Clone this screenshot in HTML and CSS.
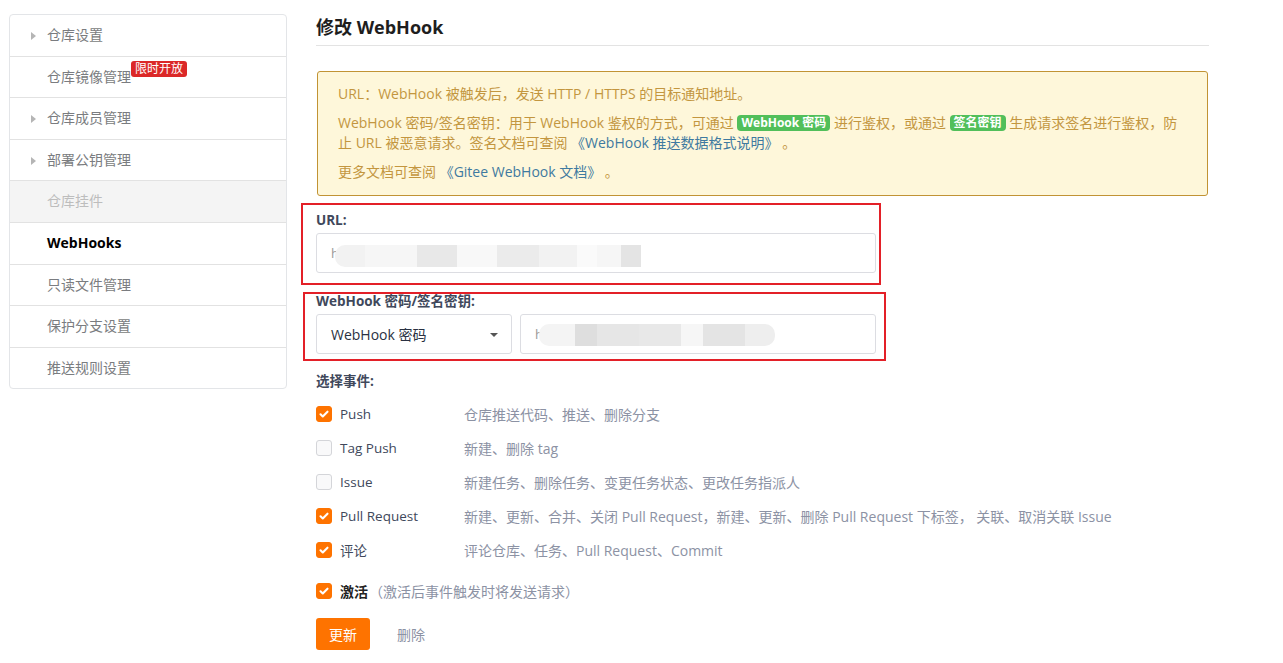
FILE: index.html
```html
<!DOCTYPE html>
<html lang="zh-CN">
<head>
<meta charset="utf-8">
<title>修改 WebHook</title>
<link rel="stylesheet" href="styles.css">
</head>
<body>
<div class="page">
  <nav class="sidebar">
    <div class="item"><span class="caret"></span>仓库设置</div>
    <div class="item">仓库镜像管理<span class="badge">限时开放</span></div>
    <div class="item"><span class="caret"></span>仓库成员管理</div>
    <div class="item"><span class="caret"></span>部署公钥管理</div>
    <div class="item disabled">仓库挂件</div>
    <div class="item active">WebHooks</div>
    <div class="item">只读文件管理</div>
    <div class="item">保护分支设置</div>
    <div class="item last">推送规则设置</div>
  </nav>

  <main class="main">
    <h2 class="title">修改 WebHook</h2>

    <div class="warning">
      <p>URL：WebHook 被触发后，发送 HTTP / HTTPS 的目标通知地址。</p>
      <p>WebHook 密码/签名密钥：用于 WebHook 鉴权的方式，可通过 <span class="tag">WebHook 密码</span> 进行鉴权，或通过 <span class="tag">签名密钥</span> 生成请求签名进行鉴权，防止 URL 被恶意请求。签名文档可查阅 <a class="link">《WebHook 推送数据格式说明》</a> 。</p>
      <p>更多文档可查阅 <a class="link">《Gitee WebHook 文档》</a> 。</p>
    </div>

    <div class="form">
      <div class="field">
        <label class="label">URL:</label>
        <div class="input">
          <span class="ch">h</span>
          <span class="blur">
            <i class="b1"></i><i class="b2"></i><i class="b3"></i><i class="b4"></i><i class="b5"></i><i class="b6"></i><i class="b7"></i><i class="b8"></i><i class="b9"></i>
          </span>
        </div>
      </div>

      <div class="field">
        <label class="label">WebHook 密码/签名密钥:</label>
        <div class="pair">
          <div class="select">WebHook 密码<span class="arrow"></span></div>
          <div class="input grow">
            <span class="ch">h</span>
            <span class="blur two">
              <i class="c1"></i><i class="c2"></i><i class="c3"></i><i class="c4"></i><i class="c5"></i><i class="c6"></i><i class="c7"></i>
            </span>
          </div>
        </div>
      </div>

      <div class="events">
        <div class="label">选择事件:</div>
        <div class="row"><span class="cb on"><svg viewBox="0 0 16 16"><path d="M4 8.3l2.6 2.5L12 5.4" /></svg></span><span class="ev">Push</span><span class="desc">仓库推送代码、推送、删除分支</span></div>
        <div class="row"><span class="cb"></span><span class="ev">Tag Push</span><span class="desc">新建、删除 tag</span></div>
        <div class="row"><span class="cb"></span><span class="ev">Issue</span><span class="desc">新建任务、删除任务、变更任务状态、更改任务指派人</span></div>
        <div class="row"><span class="cb on"><svg viewBox="0 0 16 16"><path d="M4 8.3l2.6 2.5L12 5.4" /></svg></span><span class="ev">Pull Request</span><span class="desc">新建、更新、合并、关闭 Pull Request，新建、更新、删除 Pull Request 下标签， 关联、取消关联 Issue</span></div>
        <div class="row"><span class="cb on"><svg viewBox="0 0 16 16"><path d="M4 8.3l2.6 2.5L12 5.4" /></svg></span><span class="ev">评论</span><span class="desc">评论仓库、任务、Pull Request、Commit</span></div>
      </div>

      <div class="row active-row"><span class="cb on"><svg viewBox="0 0 16 16"><path d="M4 8.3l2.6 2.5L12 5.4" /></svg></span><span class="ev strong">激活</span><span class="hint">（激活后事件触发时将发送请求）</span></div>

      <div class="actions">
        <button class="btn">更新</button>
        <span class="del">删除</span>
      </div>
    </div>

    <div class="mark mark1"></div>
    <div class="mark mark2"></div>
  </main>
</div>
</body>
</html>
```

FILE: styles.css
```css
* { box-sizing: border-box; }
html, body { margin: 0; padding: 0; background: #fff; }
body {
  font-family: "Open Sans", "Noto Sans CJK SC", sans-serif;
  font-size: 14px;
  color: #40485b;
}
.page {
  display: flex;
  gap: 29px;
  padding: 14px 0 0 9px;
  width: 1283px;
}

/* sidebar */
.sidebar {
  width: 278px;
  flex: none;
  align-self: flex-start;
  border: 1px solid #e3e5e8;
  border-radius: 4px;
}
.item {
  position: relative;
  height: 41.6px;
  line-height: 40.6px;
  padding-left: 37px;
  border-bottom: 1px solid #e2e2e2;
  font-size: 14px;
  color: #7a7c80;
}
.item.last { border-bottom: none; height: 40.6px; }
.item.disabled { background: #f4f4f4; color: #bdbdbd; }
.item.active { color: #000; font-weight: 700; }
.caret {
  position: absolute;
  left: 21px;
  top: 17px;
  width: 0; height: 0;
  border-top: 4px solid transparent;
  border-bottom: 4px solid transparent;
  border-left: 5px solid #b5b5b5;
}
.badge {
  position: absolute;
  left: 121px;
  top: 4px;
  height: 16px;
  line-height: 16px;
  padding: 0 4px;
  background: #db2828;
  color: #fff;
  font-size: 12px;
  border-radius: 3px;
}

/* main */
.main {
  position: relative;
  width: 893px;
  flex: none;
}
.title {
  margin: 0;
  font-size: 18px;
  line-height: 26px;
  font-weight: 700;
  color: #1e1e1e;
  padding-bottom: 5px;
  border-bottom: 1px solid #e3e3e3;
}
.warning {
  margin: 25px 0 0 1px;
  width: 891px;
  background: #fef7da;
  border: 1px solid #c19334;
  border-radius: 3px;
  padding: 12px 20px 13px;
  color: #c3963f;
  font-size: 14px;
  line-height: 20px;
}
.warning p { margin: 0 0 9px; }
.warning p:last-child { margin-bottom: 0; }
.link { color: #3f7aa0; text-decoration: none; }
.tag {
  display: inline-block;
  background: #52bf5a;
  color: #fff;
  font-size: 12px;
  font-weight: 700;
  line-height: 16px;
  padding: 0 4px;
  border-radius: 4px;
  vertical-align: 1px;
}

/* form */
.form { width: 560px; padding-top: 15px; }
.field { margin-bottom: 19px; }
.label {
  display: block;
  font-size: 13.5px;
  font-weight: 700;
  line-height: 18px;
  color: #40485b;
  margin-bottom: 4px;
}
.input, .select {
  height: 40px;
  border: 1px solid #dcdde2;
  border-radius: 3px;
  background: #fff;
  display: flex;
  align-items: center;
  padding-left: 14px;
  font-size: 14px;
}
.pair { display: flex; gap: 8px; }
.select {
  width: 196px;
  flex: none;
  position: relative;
  color: #2a3142;
}
.arrow {
  position: absolute;
  right: 13px;
  top: 18px;
  width: 0; height: 0;
  border-left: 4px solid transparent;
  border-right: 4px solid transparent;
  border-top: 4px solid #555;
}
.grow { flex: 1; }
.ch { color: #999; font-size: 13px; }
.blur {
  display: flex;
  align-items: stretch;
  height: 22px;
  margin-left: -4px;
  margin-top: 6px;
  filter: blur(0.6px);
}
.blur i { display: block; height: 100%; }
.b1 { width: 30px; background: #f2f2f2; border-radius: 10px 0 0 10px; }
.b2 { width: 52px; background: #f6f6f6; }
.b3 { width: 40px; background: #e8e8e8; }
.b4 { width: 40px; background: #f8f8f8; }
.b5 { width: 42px; background: #ebebeb; }
.b6 { width: 38px; background: #f2f2f2; }
.b7 { width: 20px; background: #fafafa; }
.b8 { width: 24px; background: #f6f6f6; }
.b9 { width: 20px; background: #e4e4e4; }
.two { height: 22px; margin-top: 2px; }
.c1 { width: 36px; background: #f4f4f4; border-radius: 10px 0 0 10px; }
.c2 { width: 22px; background: #dedede; }
.c3 { width: 42px; background: #e6e6e6; }
.c4 { width: 42px; background: #e8e8e8; }
.c5 { width: 22px; background: #f6f6f6; }
.c6 { width: 42px; background: #e4e4e4; }
.c7 { width: 30px; background: #eeeeee; border-radius: 0 10px 10px 0; }

.events { margin-top: -1px; }
.events .label { margin-bottom: 7px; }
.row {
  display: flex;
  align-items: center;
  height: 34px;
  white-space: nowrap;
}
.cb {
  flex: none;
  width: 16px;
  height: 16px;
  border: 1px solid #d4d5d9;
  background: #f9f9fa;
  border-radius: 3px;
  display: flex;
  align-items: center;
  justify-content: center;
}
.cb.on { background: #fe7300; border-color: #fe7300; }
.cb svg { width: 14px; height: 14px; fill: none; stroke: #fff; stroke-width: 2.4; stroke-linecap: round; stroke-linejoin: round; }
.ev { flex: none; width: 124px; margin-left: 8px; color: #40485b; font-size: 13.5px; }
.desc { color: #8c92a4; font-size: 14px; }
.active-row { margin-top: 7px; }
.ev.strong { width: auto; font-weight: 700; color: #232323; font-size: 14px; }
.hint { color: #8c92a4; font-size: 14px; margin-left: 1px; }
.actions { display: flex; align-items: center; margin-top: 10px; }
.btn {
  width: 54px;
  height: 32px;
  border: none;
  border-radius: 3px;
  background: #fe7300;
  color: #fff;
  font-family: "Noto Sans CJK SC", sans-serif;
  font-size: 14px;
  padding: 0;
}
.del { margin-left: 27px; color: #8c92a4; font-size: 14px; }

/* annotation rectangles over the form */
.mark {
  position: absolute;
  border: 2px solid #e32028;
  pointer-events: none;
}
.mark1 { left: -15px; top: 189px; width: 580px; height: 82px; }
.mark2 { left: -13px; top: 278px; width: 583px; height: 69px; }
```
